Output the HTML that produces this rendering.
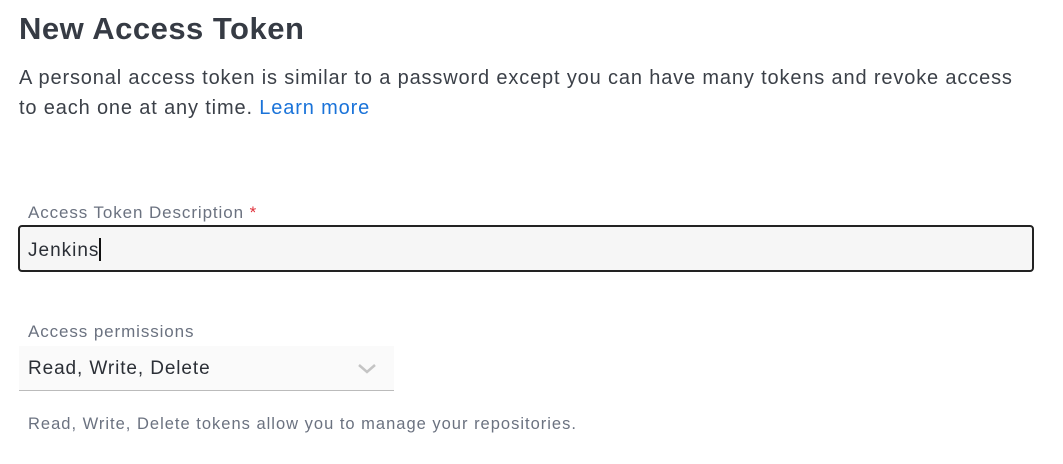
<!DOCTYPE html>
<html><head><style>
body{margin:0;width:1063px;height:464px;background:#fff;font-family:"Liberation Sans",sans-serif;position:relative;overflow:hidden}
.a{position:absolute;white-space:nowrap}
h1{position:absolute;left:19px;top:11px;margin:0;font-size:31px;font-weight:bold;color:#363b44;letter-spacing:0.5px}
.p{left:19px;font-size:20px;color:#3b4048;letter-spacing:0.85px;line-height:30px}
.lab{left:28px;font-size:17px;color:#6b7280;letter-spacing:0.9px}
</style></head><body>
<h1>New Access Token</h1>
<div class="a p" style="top:63px">A personal access token is similar to a password except you can have many tokens and revoke access</div>
<div class="a p" style="top:93px">to each one at any time. <span style="color:#1a73d9">Learn more</span></div>
<div class="a lab" style="top:203px">Access Token Description <span style="color:#e0303a">*</span></div>
<div class="a" style="left:18px;top:225px;width:1012px;height:43px;border:2px solid #222;border-radius:4px;background:#f6f6f6"></div>
<div class="a" style="left:28px;top:238px;font-size:19px;color:#2b2f36;letter-spacing:1px">Jenkins<span style="display:inline-block;width:2px;height:23px;background:#111;vertical-align:-5px"></span></div>
<div class="a lab" style="top:322px">Access permissions</div>
<div class="a" style="left:19px;top:346px;width:375px;height:44px;background:#fafafa;border-bottom:1px solid #bbb"></div>
<div class="a" style="left:28px;top:358px;font-size:19px;color:#2b2f36;letter-spacing:0.9px">Read, Write, Delete</div>
<svg class="a" style="left:357px;top:363px" width="20" height="12" viewBox="0 0 20 12"><path d="M2 2l8 7 8-7" fill="none" stroke="#c4c4c4" stroke-width="2.5"/></svg>
<div class="a lab" style="top:415px;font-size:16.5px;letter-spacing:1px">Read, Write, Delete tokens allow you to manage your repositories.</div>
</body></html>
